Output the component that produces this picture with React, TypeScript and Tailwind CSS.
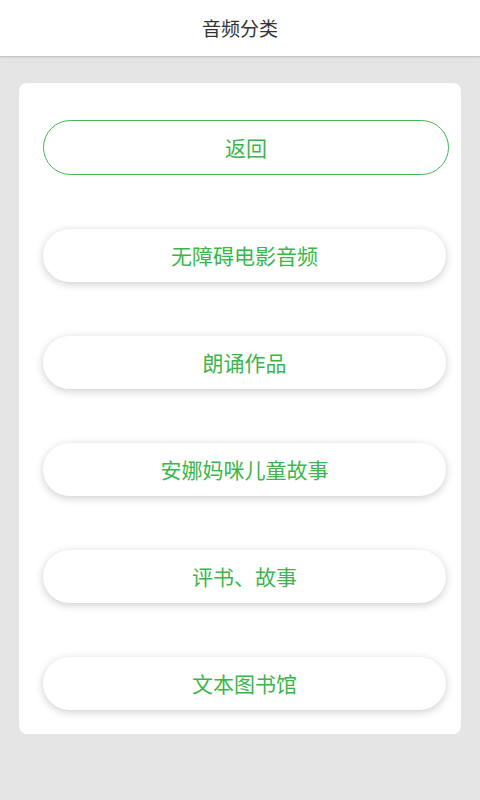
const items = ["无障碍电影音频", "朗诵作品", "安娜妈咪儿童故事", "评书、故事", "文本图书馆"];

export default function App() {
  return (
    <div
      className="min-h-[800px] w-[480px] bg-[#e5e5e5]"
      style={{ fontFamily: '"Noto Sans CJK SC", "Noto Sans", sans-serif' }}
    >
      <header className="flex h-[57px] items-center justify-center border-b border-[#c8c8c8] bg-white shadow-[0_1px_2px_rgba(0,0,0,0.08)]">
        <h1 className="text-[19px] text-[#333]">音频分类</h1>
      </header>
      <div className="px-[19px] pt-[26px]">
        <div className="rounded-[8px] bg-white pl-[24px] pr-[12px] pt-[37px] pb-[24px]">
          <button className="flex h-[55px] w-full items-center justify-center rounded-full border border-[#43b553] text-[21px] text-[#3cb54c]">
            返回
          </button>
          <div className="flex flex-col gap-[54px] pr-[3px] pt-[54px]">
            {items.map((t) => (
              <button
                key={t}
                className="flex h-[53px] w-full items-center justify-center rounded-full bg-white text-[21px] text-[#3cb54c] shadow-[0_2px_8px_rgba(0,0,0,0.2)]"
              >
                {t}
              </button>
            ))}
          </div>
        </div>
      </div>
    </div>
  );
}
